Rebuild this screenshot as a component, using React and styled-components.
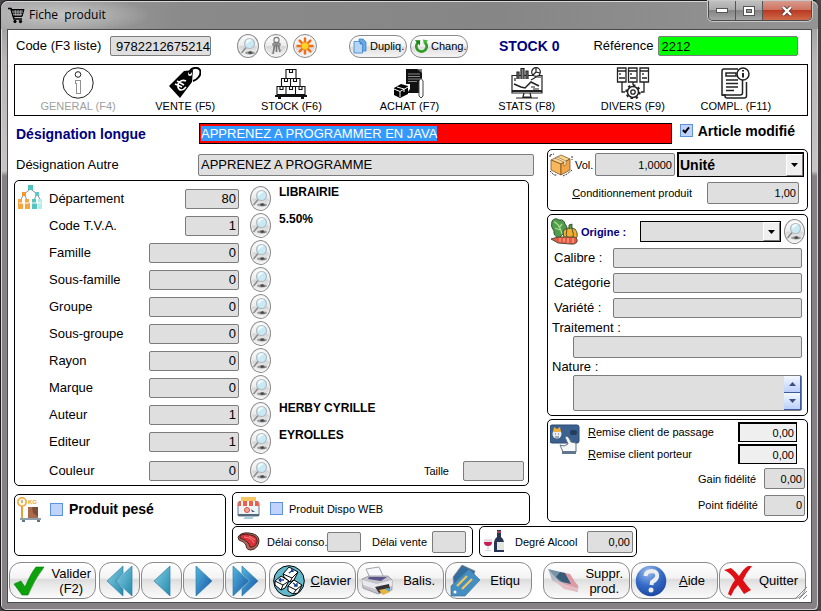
import React, { useEffect, useRef } from "react";
import styled, { createGlobalStyle, css } from "styled-components";

const sans = '"Liberation Sans", Arial, sans-serif';

const GlobalStyle = createGlobalStyle`
  *, *::before, *::after { box-sizing: border-box; }
  body { margin: 0; background: #4a484a; font: 13px/16px ${sans}; color: #000; }
  button, input, select, textarea { font: inherit; color: inherit; margin: 0; border-radius: 0; }
  button { padding: 0; cursor: pointer; }
  svg { display: block; flex: none; }
`;

/* ---------- window frame ---------- */

const Window = styled.div`
  display: flex;
  flex-direction: column;
  min-height: 100vh;
  border: 1px solid #1c1a1c;
  border-right: 3px solid #454345;
  border-radius: 8px 8px 6px 6px;
  background: linear-gradient(to bottom, #939393 0, #b9b7b8 60px, #c6c4c5 170px, #858184 175px, #858184 100%);
  box-shadow: inset 1px 1px 0 #d8d8d8, inset -1px -1px 0 #d0d0d0;
`;

const TitleBar = styled.header`
  display: flex;
  align-items: flex-start;
  height: 28px;
  padding: 0 6px 0 7px;
  border-radius: 7px 7px 0 0;
  background:
    radial-gradient(ellipse 90px 18px at 60px 14px, #c4c4c4 0, #c4c4c400 100%),
    linear-gradient(to right, #a8a8a8 0, #8a8a8a 180px, #868686 60%, #949494 100%);
  box-shadow: inset 0 1px 0 #d8d8d8;
`;

const Title = styled.h1`
  display: flex;
  align-items: center;
  gap: 4px;
  flex: 1;
  margin: 0;
  padding-top: 5px;
  font: 12px/18px "Open Sans", sans-serif;
  white-space: pre;
`;

const WindowControls = styled.div`
  display: flex;
  height: 20px;
  border: 1px solid #4c4c4c;
  border-top: 0;
  border-radius: 0 0 5px 5px;
  overflow: hidden;
  box-shadow: 0 0 0 1px #c8c8c8;
`;

const ControlButton = styled.button`
  display: grid;
  place-items: center;
  width: ${(p) => (p.$close ? 48 : 27)}px;
  border: 0;
  border-right: ${(p) => (p.$close ? 0 : "1px solid #555")};
  background: ${(p) =>
    p.$close
      ? "linear-gradient(#d79a8c 0, #cf7461 45%, #b93a22 50%, #cf6a48 100%)"
      : "linear-gradient(#c0c0c0 0, #aaaaaa 45%, #858585 50%, #a4a4a4 100%)"};
`;

const Client = styled.main`
  display: flex;
  flex-direction: column;
  flex: 1;
  margin: 0 6px 7px;
  border: 1px solid #4b494b;
  background: #fff;
`;

/* ---------- shared controls ---------- */

const Label = styled.label`
  flex: none;
  width: ${(p) => (p.$w ? p.$w + "px" : "auto")};
  white-space: nowrap;
  ${(p) => p.$small && css`font-size: 11px;`}
`;

const Underlined = styled.span`
  text-decoration: underline;
`;

const Strong = styled.strong`
  color: ${(p) => (p.$navy ? "#000080" : "#000")};
  font-size: ${(p) => p.$size || 14}px;
  white-space: nowrap;
`;

const Field = styled.input`
  flex: ${(p) => (p.$w ? "none" : "1")};
  width: ${(p) => (p.$w ? p.$w + "px" : "auto")};
  min-width: 0;
  height: ${(p) => p.$h || 20}px;
  padding: 1px 2px;
  border: 1px solid #7c7c7c;
  border-radius: 2px;
  background: ${(p) => p.$bg || "#dfdfdf"};
  text-align: ${(p) => (p.$left ? "left" : "right")};
  outline: 0;
  ${(p) => p.$small && css`font-size: 11px;`}
`;

const CodeField = styled(Field)`
  padding-right: 0;
`;

const DiscountField = styled(Field)`
  border: 1px solid #000;
  border-width: 2px 1px 1px 2px;
  border-radius: 0;
  background: #efefef;
`;

const TitleField = styled.input`
  flex: 1;
  min-width: 0;
  height: 21px;
  padding: 0 1px;
  border: 1px solid #000;
  background: #f00;
  color: #fff;
  line-height: 19px;
  outline: 0;
  caret-color: transparent;
  &::selection { background: #3399ff; color: #fff; }
`;

const Check = styled.input`
  appearance: none;
  display: grid;
  place-items: center;
  flex: none;
  width: 13px;
  height: 13px;
  border: 1px solid #5b93e0;
  background: #c1d3fb;
  &:checked::before {
    content: "";
    width: 4px;
    height: 7px;
    margin-bottom: 2px;
    border: solid #000;
    border-width: 0 2px 2px 0;
    transform: rotate(40deg);
  }
`;

const Round = styled.button`
  display: grid;
  place-items: center;
  flex: none;
  width: ${(p) => p.$w || 21}px;
  height: ${(p) => p.$h || 25}px;
  border: 1px solid #8a8a8a;
  border-radius: 50%;
  background: linear-gradient(#fdfdfd 0, #ececec 48%, #d6d6d6 52%, #f6f6f6 100%);
  box-shadow: inset 0 0 0 1px #f4f4f4;
`;

const Pill = styled.button`
  display: flex;
  align-items: center;
  gap: 2px;
  width: 58px;
  height: 23px;
  padding: 0 3px;
  border: 1px solid #8a8a8a;
  border-radius: 11px;
  background: linear-gradient(#fff 0, #f2f2f2 48%, #dedede 52%, #f4f4f4 100%);
  font: 11px/16px ${sans};
`;

const SelectBox = styled.div`
  display: grid;
  flex: 1;
  grid-template-columns: 1fr 17px;
  height: ${(p) => p.$h}px;
  border: solid #000;
  border-width: ${(p) => (p.$thick ? "2px 1px 1px 2px" : "1px")};
  background: #dfdfdf;
`;

const Select = styled.select`
  grid-area: 1 / 1 / 2 / 3;
  appearance: none;
  min-width: 0;
  padding: 0 18px 0 1px;
  border: 0;
  background: transparent;
  font-weight: bold;
  font-size: 14px;
  outline: 0;
`;

const SelectArrow = styled.span`
  grid-area: 1 / 2;
  display: grid;
  place-items: center;
  border: 1px solid;
  border-color: #fff #777 #777 #fff;
  background: #efefef;
  pointer-events: none;
`;

const Panel = styled.section`
  border: 1px solid #000;
  border-radius: 5px;
  background: #fff;
`;

/* ---------- header rows ---------- */

const CodeRow = styled.div`
  display: flex;
  align-items: center;
  height: 34px;
  padding: 0 13px 2px 8px;
`;

const IconGroup = styled.div`
  display: flex;
  gap: 5px;
  margin: 0 32px 0 26px;
`;

const PillGroup = styled.div`
  display: flex;
  gap: 3px;
  margin-right: 31px;
`;

const Reference = styled.div`
  display: flex;
  align-items: center;
  flex: 1;
  min-width: 0;
  margin-left: 34px;
`;

const Tabs = styled.nav`
  display: grid;
  grid-template-columns: 108fr 106fr 106fr 130fr 104fr 108fr 98fr;
  height: 52px;
  margin: 0 3px 0 6px;
  padding: 2px 22px 2px 9px;
  border: 1px solid #000;
`;

const Tab = styled.button`
  display: flex;
  flex-direction: column;
  align-items: center;
  border: 0;
  background: none;
  font: 11px/14px ${sans};
  color: ${(p) => (p.disabled ? "#a0a0a0" : "#000")};
  white-space: nowrap;
`;

const LongRow = styled.div`
  display: flex;
  align-items: center;
  height: 33px;
  padding: 2px 16px 0 8px;
`;

const LongLabel = styled(Label)`
  width: 183px;
  color: #000080;
  font-weight: bold;
  font-size: 14px;
`;

const CheckLine = styled.label`
  display: flex;
  align-items: center;
  gap: 5px;
  margin-left: 8px;
  padding-bottom: 6px;
`;

/* ---------- body ---------- */

const Body = styled.div`
  display: grid;
  grid-template-columns: 218px minmax(0, 1fr) 261px;
  grid-template-rows: 343px 34px auto;
  padding: 0 3px 0 6px;
`;

const MainArea = styled.div`
  grid-area: 1 / 1 / 2 / 3;
`;

const OtherRow = styled.div`
  display: flex;
  align-items: center;
  height: 31px;
  padding: 0 13px 0 2px;
`;

const AttributesPanel = styled(Panel)`
  display: grid;
  grid-template-columns: 31px 1fr;
  margin-right: 18px;
  padding: 4px 4px 1px 3px;
`;

const Rows = styled.div`
  display: flex;
  flex-direction: column;
`;

const AttributeRow = styled.div`
  display: flex;
  align-items: center;
  height: 27px;
  margin-top: ${(p) => (p.$last ? 2 : 0)}px;
`;

const AttributeField = styled(Field)`
  width: ${(p) => (p.$short ? 54 : 90)}px;
  margin: 0 11px 0 ${(p) => (p.$short ? 36 : 0)}px;
  flex: none;
`;

const AttributeName = styled(Strong)`
  align-self: flex-start;
  margin-left: 8px;
  line-height: 15px;
`;

const SizeGroup = styled.div`
  display: flex;
  align-items: center;
  gap: 14px;
  margin-left: auto;
`;

const SidePanels = styled.div`
  grid-area: 1 / 3 / 3 / 4;
  display: flex;
  flex-direction: column;
  gap: 3px;
`;

const SidePanel = styled(Panel)`
  display: flex;
  flex-direction: column;
  padding: ${(p) => p.$pad || "3px 2px 4px 2px"};
`;

const Line = styled.div`
  display: flex;
  align-items: center;
  gap: ${(p) => p.$gap || 0}px;
  height: ${(p) => p.$h || 25}px;
  padding: ${(p) => p.$pad || "0"};
  justify-content: ${(p) => p.$justify || "flex-start"};
`;

const NatureBox = styled.div`
  display: flex;
  height: 36px;
  margin: 0 3px 0 23px;
  border: 1px solid #7c7c7c;
  border-radius: 2px;
  background: #dfdfdf;
`;

const NatureText = styled.textarea`
  flex: 1;
  min-width: 0;
  border: 0;
  background: transparent;
  resize: none;
  outline: 0;
`;

const Stepper = styled.div`
  display: flex;
  flex-direction: column;
  width: 17px;
`;

const StepButton = styled.button`
  display: grid;
  place-items: center;
  flex: 1;
  border: 0;
  border-right: 1px solid #3c5a9c;
  border-bottom: 1px solid #3c5a9c;
  background: linear-gradient(#f4f8ff, #bccffa);
`;

const LoyaltyPanel = styled(Panel)`
  display: grid;
  grid-template-columns: 38px 1fr;
  padding: 1px 2px 3px 2px;
`;

const LoyaltyIcon = styled.div`
  padding-top: 3px;
`;

const WeightPanel = styled(Panel)`
  grid-area: 2 / 1 / 4 / 2;
  display: flex;
  align-items: flex-start;
  gap: 8px;
  margin: 2px 6px 1px 0;
  padding: 2px;
`;

const WeightCheck = styled.label`
  display: flex;
  align-items: center;
  gap: 6px;
  padding-top: 4px;
`;

const WebPanel = styled(Panel)`
  grid-area: 2 / 2;
  display: flex;
  align-items: center;
  gap: 10px;
  margin: 0 17px 1px 0;
  padding: 0 4px;
`;

const SmallCheck = styled.label`
  display: flex;
  align-items: center;
  gap: 6px;
  font-size: 11px;
`;

const BottomPanels = styled.div`
  grid-area: 3 / 2 / 4 / 4;
  display: flex;
  gap: 6px;
`;

const DelayPanel = styled(Panel)`
  display: flex;
  align-items: center;
  height: 31px;
  width: 241px;
  padding: 0 4px;
`;

const AlcoholPanel = styled(Panel)`
  display: flex;
  align-items: center;
  gap: 10px;
  height: 31px;
  width: 158px;
  padding: 0 3px;
`;

const ActionBar = styled.footer`
  display: flex;
  align-items: center;
  gap: 1px;
  margin-top: auto;
  padding: 4px 4px 3px 1px;
`;

const Action = styled.button`
  display: flex;
  align-items: center;
  justify-content: space-between;
  width: ${(p) => (p.$nav ? 41 : 87)}px;
  height: 37px;
  margin-left: ${(p) => (p.$push ? "auto" : p.$gap ? "2px" : 0)};
  padding: 0 ${(p) => p.$right || 4}px 0 3px;
  border: 1px solid #8a8a8a;
  border-radius: 12px;
  background: linear-gradient(#fff 0, #f3f3f3 42%, #dcdcdc 48%, #e8e8e8 62%, #fafafa 100%);
  line-height: 15px;
  text-align: center;
  ${(p) => p.$nav && css`
    justify-content: center;
    padding: 0;
  `}
`;

const Grip = styled.div`
  display: flex;
  align-self: flex-end;
  width: 0;
  justify-content: flex-end;
`;

/* ---------- icons ---------- */

const Magnifier = () => (
  <svg width="17" height="21" viewBox="0 0 17 21">
    <ellipse cx="10" cy="17" rx="5" ry="1.4" fill="#9b9b9b" />
    <path d="M8 16 L11 15 L13 17.500 L9 18 Z" fill="#4d4d4d" />
    <path d="M6 11.500 L1.500 17" stroke="#888" strokeWidth="1.4" />
    <circle cx="9.5" cy="7.5" r="5" fill="#c9e9f5" stroke="#b0bbc2" strokeWidth="1.1" />
    <path d="M6 5 Q9 2 12 4 Q9 5 6.5 8Z" fill="#f4fcff" />
  </svg>
);

const LookupButton = ({ label, w, h }) => (
  <Round type="button" aria-label={label} $w={w} $h={h}><Magnifier /></Round>
);

const CartIcon = () => (
  <svg width="17" height="17" viewBox="0 0 17 17" fill="none" stroke="#000">
    <path d="M0 1.500H3L6 12H14" strokeWidth="1.5" />
    <path d="M3 2.500H16L14 9.500H5Z" fill="#333" />
    <path d="M4 5H15M5 7.500H14M7 3L8 9M10 3V9M13 3L12 9" stroke="#bbb" strokeWidth=".7" />
    <circle cx="7" cy="14.5" r="1.2" fill="#000" /><circle cx="12.5" cy="14.5" r="1.2" fill="#000" />
  </svg>
);

const KeysIcon = () => (
  <svg width="14" height="20" viewBox="0 0 14 20" fill="#999" stroke="#777">
    <circle cx="7.500" cy="4" r="2.6" fill="none" strokeWidth="1.1" />
    <circle cx="5.500" cy="8.500" r="1.8" /><circle cx="9.500" cy="8.500" r="1.8" />
    <path d="M5.500 10 L4 18M9.500 10 L11 16M7.500 9V16" strokeWidth="1.6" />
    <path d="M2.500 17H5M10 14H12.500" stroke="#999" />
  </svg>
);

const SunIcon = () => (
  <svg width="18" height="18" viewBox="0 0 18 18">
    <g stroke="#f26a12" strokeWidth="2.4" strokeLinecap="round">
      <path d="M9 1.5V16.5M1.5 9H16.5M3.6 3.6L14.4 14.4M14.4 3.6L3.6 14.4" />
    </g>
    <circle cx="9" cy="9" r="3.8" fill="#ffd426" stroke="#f5961e" />
  </svg>
);

const CopyIcon = () => (
  <svg width="15" height="17" viewBox="0 0 15 17" stroke="#3f83cc" strokeWidth=".8">
    <path d="M6 1H10L13 4V13H6Z" fill="#6aa8e6" />
    <path d="M1 3.5H7L9.5 6V15H1Z" fill="#b6d6f7" />
    <path d="M7 3.5V6H9.5" fill="#3c8ae0" />
  </svg>
);

const RefreshIcon = () => (
  <svg width="15" height="15" viewBox="0 0 15 15">
    <path d="M4.2 3.2A5.3 5.3 0 1 0 10.8 3.2" fill="none" stroke="#2d9a22" strokeWidth="2.7" />
    <path d="M.8 1.2L6.2 1.2L6 6.4Z" fill="#168312" />
    <path d="M9 .6L14 1.6L10 6Z" fill="#46b539" />
  </svg>
);

const InfoTab = () => (
  <svg width="32" height="32" viewBox="0 0 32 32" fill="none" stroke="#222" strokeWidth="1">
    <circle cx="16" cy="16" r="15.2" /><circle cx="16" cy="7.5" r="2.8" />
    <path d="M13.500 13.5H18.500V26.500H14.500V16.500H13.500Z" strokeDasharray="1 1" />
  </svg>
);

const TagTab = () => (
  <svg width="32" height="32" viewBox="0 0 32 32">
    <path d="M0 19L15 4L24 3L23 15L11 31Z" fill="#000" />
    <circle cx="21" cy="7" r="2" fill="#fff" />
    <path d="M21 7C20 1 28 -1 31 3C33 8 28 13 24 14" fill="none" stroke="#000" strokeWidth="2" />
    <path d="M17 14C12 12 8 16 9 20S14 24 17 20M6 17L13 20M8 14L15 18" fill="none" stroke="#fff" strokeWidth="1.6" />
  </svg>
);

const StockTab = () => (
  <svg width="32" height="32" viewBox="0 0 32 32" fill="none" stroke="#111" strokeWidth="1.1">
    <path d="M11 2.500H21V11.500H11ZM6.500 11.500H15.500V19.500H6.500ZM15.500 11.500H25V19.500H15.500ZM2 19.500H11V27.500H2ZM11 19.500H20.500V27.500H11ZM20.500 19.500H30V27.500H20.500Z" />
    <path d="M14.5 2.500V5.500H17.500V2.500M9.500 12V14.500H12.500V12M18.500 12V14.500H21.500V12M5 20V22.500H8V20M14.500 20V22.500H17.500V20M24 20V22.500H27V20" />
    <path d="M0 29H32M3 31H6M26 31H29" strokeWidth="2" />
  </svg>
);

const PurchaseTab = () => (
  <svg width="32" height="32" viewBox="0 0 32 32">
    <path d="M13 2H29V26H14L17 22V17H13Z" fill="#111" />
    <path d="M15 7H27M15 9.500H27M15 12H27M15 14.500H24" stroke="#8a8a8a" strokeWidth="1.2" />
    <path d="M24 2H29V6Z" fill="#777" />
    <path d="M26 29V14L28 11L30 14V29L28 31Z" fill="#fff" stroke="#444" />
    <path d="M1 21L8 17L15 19V27L7 31L1 28Z" fill="#000" />
    <path d="M1 22L7 24.500L15 20M7 25V30M4 20L11 22V25" fill="none" stroke="#fff" />
  </svg>
);

const StatsTab = () => (
  <svg width="32" height="32" viewBox="0 0 32 32" fill="none" stroke="#222" strokeWidth="1.2">
    <path d="M1 8.500H31V26H1Z" /><path d="M1 24H31" strokeWidth="2" />
    <path d="M13 26L12 30H20L19 26M5 31H27" />
    <path d="M6 12V5H8V12M10 12V1.500H13V12M15 12V4H17V12" fill="#888" />
    <circle cx="25" cy="5" r="4.300" fill="#fff" /><path d="M25 1V5L29 6M25 5L22 8" />
    <path d="M3 17L10 20L14 21L20 15L28 19" strokeWidth="1.500" />
    <path d="M20 13L25 10H30M4 11V14M22 22H28M20 20H24" />
  </svg>
);

const ServersTab = () => (
  <svg width="34" height="32" viewBox="0 0 34 32" fill="none" stroke="#222" strokeWidth="1.300">
    <path d="M1.500 1H10V15H1.500ZM12.500 1H21V15H12.500ZM24 1H32.500V15H24Z" />
    <path d="M1.500 4H10M12.500 4H21M24 4H32.500M3 11H9M14 11H20M26 11H31M4 8V6M15 8V6M27 8V6" />
    <path d="M6 15V25H9M28 15V25H25M17 15V18" />
    <circle cx="17" cy="25" r="5.500" strokeWidth="1.500" /><circle cx="17" cy="25" r="2.200" />
    <circle cx="17" cy="25" r="6.800" strokeDasharray="2.500 2.800" strokeWidth="1.800" />
  </svg>
);

const DocumentTab = () => (
  <svg width="32" height="32" viewBox="0 0 32 32" fill="none" stroke="#222" strokeWidth="1.500">
    <path d="M18 2H4Q2 2 2 4V28H5V29Q5 31 7 31H24Q26.500 31 26.500 29V15" />
    <path d="M2 28H20Q22.500 28 22.500 26V13" />
    <path d="M6 6H16V9H6ZM6 13H18M6 16.500H18M6 20H18M6 23.500H14" />
    <circle cx="23" cy="7" r="6" fill="#fff" /><path d="M23 6V10.500M23 3V4.500" strokeWidth="2" />
  </svg>
);

const TreeIcon = () => (
  <svg width="25" height="25" viewBox="0 0 25 25">
    <path d="M12.500 4L6 9L2.500 15M6 9L9 15M12.500 4L19 9L16 15M19 9L22.500 15" fill="none" stroke="#7a9a94" />
    <rect x="10" y="0" width="5" height="5" fill="#4fc3bd" />
    <rect x="4" y="7" width="4" height="4" fill="#f4982c" />
    <rect x="17" y="7" width="4" height="4" fill="#5cc9c4" />
    <path d="M0 14H4V18H5V24H0ZM7 14H11V18H12V24H7Z" fill="#f7a540" />
    <path d="M14 14H18V18H19V24H14Z" fill="#56c4c0" /><path d="M20 14H24V24H20Z" fill="#b3ecea" />
    <path d="M1 18H11M14 18H23" stroke="#fff" />
  </svg>
);

const BoxIcon = () => (
  <svg width="24" height="24" viewBox="0 0 24 24">
    <path d="M1 2L5 1M1 2V5M23 3V7M1 18L5 22H8M23 17L18 21L14 23" fill="none" stroke="#333" strokeDasharray="2 1" />
    <path d="M2 7L12 2L21 6L12 11Z" fill="#ffd58b" stroke="#6e4518" strokeWidth=".7" />
    <path d="M2 7L12 11V22L2 17Z" fill="#f9b85c" stroke="#6e4518" strokeWidth=".7" />
    <path d="M12 11L21 6V17L12 22Z" fill="#f2a545" stroke="#6e4518" strokeWidth=".7" />
    <path d="M6 5L15 9V13L17 12V8L8 4Z" fill="#fff1cf" stroke="#6e4518" strokeWidth=".5" />
  </svg>
);

const VegetablesIcon = () => (
  <svg width="28" height="28" viewBox="0 0 28 28" stroke="#263d2b" strokeWidth=".8">
    <path d="M2 3Q5 -1 9 2Q14 1 15 6Q19 10 15 14L9 20Q3 18 4 13Q0 9 2 3Z" fill="#4d9d4b" />
    <path d="M4 4Q9 5 12 16M12 6L9 10M5 10L10 12" fill="none" stroke="#a7d88b" strokeWidth="1.300" />
    <path d="M13 13Q18 8 25 11Q29 16 26 21Q19 24 14 21Z" fill="#f3ae31" />
    <path d="M19 11V7L22 6V11" fill="#68943a" /><path d="M17 11Q15 16 18 22M22 11Q25 16 22 22" fill="none" />
    <path d="M1 21L8 19H24Q28 20 27 24Q25 27 20 26L8 25Z" fill="#e65a43" />
    <path d="M10 20V24M14 20V24M18 20V25M23 20V25" stroke="#ffd0b0" />
  </svg>
);

const CardIcon = () => (
  <svg width="30" height="30" viewBox="0 0 30 30">
    <rect x="0" y="1" width="29" height="18" rx="2" fill="#3d618f" stroke="#294b75" />
    <circle cx="7" cy="10" r="4.500" fill="#e9edf2" /><path d="M3 8L4 3L7 5L10 3L11 8Z" fill="#f0ae3d" />
    <path d="M5 10H6M8 10H9M5 13H9" stroke="#54657a" />
    <rect x="20" y="6" width="7" height="5" rx="2" fill="#243e5e" />
    <path d="M15 13Q17 11 19 14L21 18L26 19V28H13L10 21L14 22L18 20Z" fill="#f7f8fa" stroke="#5f7187" />
    <path d="M12 27H26V30H12Z" fill="#61758b" />
  </svg>
);

const ScaleIcon = () => (
  <svg width="25" height="25" viewBox="0 0 25 25">
    <path d="M5 8V21" stroke="#e8a23c" strokeWidth="2" />
    <circle cx="5" cy="5" r="4.200" fill="#fff8df" stroke="#eda436" strokeWidth="1.500" /><path d="M5 3V6" stroke="#777" />
    <text x="11" y="7" fontFamily="Liberation Sans" fontSize="6" fontWeight="bold" fill="#eda436">KG</text>
    <rect x="11" y="10" width="10" height="11" fill="#a96b4b" /><path d="M15 10L16 16L21 20V10Z" fill="#7d4c39" />
    <path d="M3 21H24V23H3Z" fill="#90a0ab" /><path d="M5 24H8M20 24H23" stroke="#647681" strokeWidth="2" />
  </svg>
);

const ShopIcon = () => (
  <svg width="23" height="23" viewBox="0 0 23 23">
    <rect x="1" y="5" width="21" height="14" rx="1" fill="#eff3f6" stroke="#657b8d" />
    <rect x="4" y="0" width="15" height="5" fill="#f7c65e" />
    <path d="M2 4H21L22 9H1Z" fill="#f15d4d" /><path d="M5 4V9M11 4V9M17 4V9" stroke="#fff" strokeWidth="2" />
    <circle cx="10" cy="13" r="2.500" fill="#f4a79b" stroke="#dd4e42" /><path d="M14 12L18 15H15Z" fill="#465c70" />
    <path d="M1 18H22" stroke="#52697a" strokeWidth="2" /><path d="M8 20H16V22H6Z" fill="#a9cee0" />
  </svg>
);

const MeatIcon = () => (
  <svg width="23" height="19" viewBox="0 0 23 19" stroke="#442522" strokeWidth="1">
    <path d="M1 5Q4 0 12 1Q22 2 22 9Q21 17 14 18Q9 18 9 13Q8 10 2 8Z" fill="#b0645a" />
    <path d="M3 4Q6 1 13 3Q21 4 20 10Q18 16 13 15Q12 9 3 6Z" fill="#dd3038" />
    <path d="M7 5Q14 5 17 11M12 4L18 8" fill="none" stroke="#f68686" />
  </svg>
);

const WineIcon = () => (
  <svg width="22" height="23" viewBox="0 0 22 23">
    <path d="M14 0H18V7Q21 9 21 12V22H11V12Q11 9 14 7Z" fill="#263654" />
    <path d="M14 1H18V3H14Z" fill="#b34660" /><rect x="14" y="12" width="7" height="8" fill="#e5e5df" />
    <path d="M1 9H9Q10 15 6 16V20H8V21H2V20H4V16Q0 15 1 9Z" fill="#e3dfe6" />
    <path d="M1 12H9Q9 16 5 16T1 12Z" fill="#c41e58" />
  </svg>
);

const CheckMark = () => (
  <svg width="32" height="32" viewBox="0 0 32 32">
    <path d="M1 19L8 16L12 22Q18 8 23 2H31Q21 15 15 30H9Z" fill="#0ca20c" stroke="#087808" strokeWidth=".6" />
  </svg>
);

const Arrows = ({ double, right, dark }) => (
  <svg width={double ? 27 : 18} height="32" viewBox={double ? "0 0 27 32" : "0 0 18 32"}>
    <defs>
      <linearGradient id={`arrow${double ? 2 : 1}${right ? "r" : "l"}`} x1="0" y1="0" x2="1" y2="1">
        <stop offset="0" stopColor={dark ? "#55b7dc" : "#8bd0e2"} />
        <stop offset="1" stopColor={dark ? "#1450a5" : "#2089ad"} />
      </linearGradient>
    </defs>
    <g fill={`url(#arrow${double ? 2 : 1}${right ? "r" : "l"})`} stroke="#2d83af" strokeWidth=".7">
      {right ? (
        <>
          <path d="M1 1L17 16L1 31Z" />
          {double && <path d="M10 1L26 16L10 31L10 24L18 16L10 8Z" />}
        </>
      ) : (
        <>
          {double && <path d="M17 1L1 16L17 31L17 24L9 16L17 8Z" />}
          <path d={double ? "M26 1L10 16L26 31Z" : "M17 1L1 16L17 31Z"} />
        </>
      )}
    </g>
  </svg>
);

const KeyboardIcon = () => (
  <svg width="32" height="32" viewBox="0 0 32 32" stroke="#000">
    <circle cx="16" cy="16" r="15.300" fill="#62b9cc" />
    <g fill="#fff">
      <path d="M10 9L16 2L25 7L21 15L17 17L11 12Z" /><path d="M2 16L8 11L16 16L12 23L8 25L2 20Z" />
      <path d="M15 21L21 15L29 20L25 28L20 29L15 26Z" />
    </g>
    <path d="M10 9L19 13L25 7M19 13L17 17M2 16L10 20L16 16M10 20L8 25M15 21L23 25L29 20M23 25L20 29" fill="none" />
    <path d="M16 8L20 5M18 5H20V7M11 15H6M8 13L6 15L8 17M20 18L24 21M24 18V21H21" fill="none" stroke="#123c91" strokeWidth="1.300" />
  </svg>
);

const PrinterIcon = () => (
  <svg width="32" height="30" viewBox="0 0 32 30">
    <path d="M5 3L18 1L23 12L10 14Z" fill="#f7f8fa" stroke="#a5a5a8" />
    <path d="M1 13L8 10L27 10L31 14V24L17 28L2 22Z" fill="#c4c3ca" stroke="#8a878f" strokeWidth=".7" />
    <path d="M8 11L26 11L20 15L7 13Z" fill="#5b538b" /><path d="M1 14L16 18L31 14V20L17 24L2 19Z" fill="#e9e8ed" />
    <path d="M14 21L28 18L29 23L18 27Z" fill="#333" /><path d="M18 24L28 22L29 26L22 29Z" fill="#e9b340" /><path d="M24 23L28 22L29 26Z" fill="#36a7dc" />
  </svg>
);

const TagsIcon = () => (
  <svg width="32" height="32" viewBox="0 0 32 32">
    <path d="M4 12L10 4L13 0L26 6L20 24L5 22Z" fill="#356d9e" stroke="#888" strokeWidth=".7" />
    <path d="M2 21L20 4L31 15L16 31H2Z" fill="#438fc4" stroke="#447397" strokeWidth=".7" />
    <circle cx="6" cy="27" r="1.500" fill="#fff" />
    <path d="M8 21L18 11M13 24L23 14" stroke="#f3c657" strokeWidth="2.200" />
  </svg>
);

const EraserIcon = () => (
  <svg width="33" height="26" viewBox="0 0 33 26">
    <path d="M1 1L16 7L31 17V24L18 20L5 12Z" fill="#aeb9c5" />
    <path d="M1 1L14 4L21 10L13 14Z" fill="#7793a5" /><path d="M14 4L23 6L32 20L19 17L10 9Z" fill="#dd9aa5" />
    <path d="M13 4L18 5L24 16L15 14L9 9Z" fill="#365c78" /><path d="M5 10L17 16L31 20V24L17 21Z" fill="#e3bcc4" />
  </svg>
);

const HelpIcon = () => (
  <svg width="32" height="32" viewBox="0 0 32 32">
    <defs><radialGradient id="help" cx=".4" cy=".2" r=".9"><stop offset="0" stopColor="#9dbdf0" /><stop offset=".5" stopColor="#356cc8" /><stop offset="1" stopColor="#173f98" /></radialGradient></defs>
    <circle cx="16" cy="16" r="15.300" fill="url(#help)" />
    <path d="M10.500 11Q11 6 17 6Q23 6.500 22 12Q21 15 17 17L16.500 20" fill="none" stroke="#eee" strokeWidth="4" />
    <circle cx="16" cy="25" r="2.500" fill="#eee" />
  </svg>
);

const CrossIcon = () => (
  <svg width="29" height="32" viewBox="0 0 29 32">
    <path d="M1 5L8 3Q13 7 16 11Q21 3 25 1H29Q23 8 20 15Q24 21 28 25L21 29L15 20Q10 25 8 31L5 29Q8 20 12 15Q8 8 1 5Z" fill="#df1014" />
  </svg>
);

const Triangle = ({ up, wide, color = "#000" }) => (
  <svg width={wide ? 9 : 7} height="4" viewBox="0 0 7 4" preserveAspectRatio="none"><path d={up ? "M0 4L3.500 0L7 4Z" : "M0 0H7L3.500 4Z"} fill={color} /></svg>
);

/* ---------- data ---------- */

const tabs = [
  ["GENERAL (F4)", InfoTab, true],
  ["VENTE (F5)", TagTab],
  ["STOCK (F6)", StockTab],
  ["ACHAT (F7)", PurchaseTab],
  ["STATS (F8)", StatsTab],
  ["DIVERS (F9)", ServersTab],
  ["COMPL. (F11)", DocumentTab],
];

const attributes = [
  { label: "Département", value: "80", name: "LIBRAIRIE", short: true },
  { label: "Code T.V.A.", value: "1", name: "5.50%", short: true },
  { label: "Famille", value: "0" },
  { label: "Sous-famille", value: "0" },
  { label: "Groupe", value: "0" },
  { label: "Sous-groupe", value: "0" },
  { label: "Rayon", value: "0" },
  { label: "Marque", value: "0" },
  { label: "Auteur", value: "1", name: "HERBY CYRILLE" },
  { label: "Editeur", value: "1", name: "EYROLLES" },
  { label: "Couleur", value: "0", size: true },
];

export default function App() {
  const titleRef = useRef(null);
  useEffect(() => {
    titleRef.current.focus();
    titleRef.current.select();
  }, []);

  return (
    <>
      <GlobalStyle />
      <Window>
        <TitleBar>
          <Title><CartIcon />{"Fiche  produit"}</Title>
          <WindowControls>
            <ControlButton type="button" aria-label="Réduire">
              <svg width="12" height="5"><rect x=".5" y=".5" width="11" height="4" fill="#fff" stroke="#555" /></svg>
            </ControlButton>
            <ControlButton type="button" aria-label="Agrandir">
              <svg width="12" height="10"><rect x=".5" y=".5" width="11" height="9" fill="#fff" stroke="#555" /><rect x="3.500" y="3.500" width="5" height="3" fill="#999" stroke="#555" /></svg>
            </ControlButton>
            <ControlButton type="button" aria-label="Fermer" $close>
              <svg width="12" height="10" viewBox="0 0 12 10"><path d="M2 1L10 9M10 1L2 9" stroke="#5b3c3c" strokeWidth="4" /><path d="M2 1L10 9M10 1L2 9" stroke="#fff" strokeWidth="2.400" /></svg>
            </ControlButton>
          </WindowControls>
        </TitleBar>

        <Client>
          <CodeRow>
            <Label htmlFor="code" $w={94}>Code (F3 liste)</Label>
            <CodeField id="code" defaultValue="9782212675214" $w={101} />
            <IconGroup>
              <LookupButton label="Rechercher le code" w={22} h={24} />
              <Round type="button" aria-label="Clés" $w={24} $h={24}><KeysIcon /></Round>
              <Round type="button" aria-label="Nouveau" $w={24} $h={24}><SunIcon /></Round>
            </IconGroup>
            <PillGroup>
              <Pill type="button"><CopyIcon />Dupliq.</Pill>
              <Pill type="button"><RefreshIcon />Chang.</Pill>
            </PillGroup>
            <Strong $navy>STOCK 0</Strong>
            <Reference>
              <Label htmlFor="ref" $w={65}>Référence</Label>
              <Field id="ref" defaultValue="2212" $bg="#00ff00" $left />
            </Reference>
          </CodeRow>

          <Tabs>
            {tabs.map(([label, Icon, off]) => (
              <Tab key={label} type="button" disabled={off}><Icon />{label}</Tab>
            ))}
          </Tabs>

          <LongRow>
            <LongLabel htmlFor="long">Désignation longue</LongLabel>
            <TitleField id="long" ref={titleRef} defaultValue="APPRENEZ A PROGRAMMER EN JAVA" />
            <CheckLine><Check type="checkbox" defaultChecked /><Strong>Article modifié</Strong></CheckLine>
          </LongRow>

          <Body>
            <MainArea>
              <OtherRow>
                <Label htmlFor="other" $w={182}>Désignation Autre</Label>
                <Field id="other" defaultValue="APPRENEZ A PROGRAMME" $left $h={22} />
              </OtherRow>
              <AttributesPanel>
                <TreeIcon />
                <Rows>
                  {attributes.map((a) => (
                    <AttributeRow key={a.label} $last={a.size}>
                      <Label htmlFor={a.label} $w={100}>{a.label}</Label>
                      <AttributeField id={a.label} defaultValue={a.value} $short={a.short} />
                      <LookupButton label={`Rechercher ${a.label}`} />
                      {a.name && <AttributeName $size={12}>{a.name}</AttributeName>}
                      {a.size && (
                        <SizeGroup>
                          <Label htmlFor="size" $small>Taille</Label>
                          <Field id="size" $w={61} />
                        </SizeGroup>
                      )}
                    </AttributeRow>
                  ))}
                </Rows>
              </AttributesPanel>
            </MainArea>

            <SidePanels>
              <SidePanel $pad="1px 3px 3px 1px">
                <Line $gap={2} $h={27}>
                  <BoxIcon />
                  <Label htmlFor="vol" $w={18} $small>Vol.</Label>
                  <Field id="vol" defaultValue="1,0000" $w={80} $h={23} $small />
                  <SelectBox $h={25} $thick>
                    <Select aria-label="Unité de volume"><option>Unité</option></Select>
                    <SelectArrow><Triangle /></SelectArrow>
                  </SelectBox>
                </Line>
                <Line $h={29} $gap={15} $justify="flex-end" $pad="0 5px 0 0">
                  <Label htmlFor="cond" $small><Underlined>C</Underlined>onditionnement produit</Label>
                  <Field id="cond" defaultValue="1,00" $w={92} $h={22} $small />
                </Line>
              </SidePanel>

              <SidePanel>
                <Line $h={27} $gap={3}>
                  <VegetablesIcon />
                  <Label htmlFor="origin" $w={56}><Strong $navy $size={11}>Origine :</Strong></Label>
                  <SelectBox $h={21}>
                    <Select id="origin"><option></option></Select>
                    <SelectArrow><Triangle /></SelectArrow>
                  </SelectBox>
                  <LookupButton label="Rechercher l'origine" />
                </Line>
                <Line $pad="0 3px 0 4px"><Label htmlFor="cal" $w={59}>Calibre :</Label><Field id="cal" /></Line>
                <Line $pad="0 3px 0 4px"><Label htmlFor="cat" $w={59}>Catégorie</Label><Field id="cat" /></Line>
                <Line $pad="0 3px 0 4px"><Label htmlFor="var" $w={59}>Variété :</Label><Field id="var" /></Line>
                <Line $h={16} $pad="0 0 0 2px"><Label htmlFor="trait">Traitement :</Label></Line>
                <Line $h={22} $pad="0 3px 0 23px"><Field id="trait" $h={22} /></Line>
                <Line $h={17} $pad="0 0 0 2px"><Label htmlFor="nat">Nature :</Label></Line>
                <NatureBox>
                  <NatureText id="nat" />
                  <Stepper>
                    <StepButton type="button" aria-label="Monter"><Triangle up color="#3a4f86" /></StepButton>
                    <StepButton type="button" aria-label="Descendre"><Triangle color="#3a4f86" /></StepButton>
                  </Stepper>
                </NatureBox>
              </SidePanel>

              <LoyaltyPanel>
                <LoyaltyIcon><CardIcon /></LoyaltyIcon>
                <Rows>
                  <Line $h={22} $justify="space-between" $pad="0 8px 0 0">
                    <Label htmlFor="pass" $small><Underlined>R</Underlined>emise client de passage</Label>
                    <DiscountField id="pass" defaultValue="0,00" $w={59} $small />
                  </Line>
                  <Line $h={22} $justify="space-between" $pad="0 8px 0 0">
                    <Label htmlFor="port" $small><Underlined>R</Underlined>emise client porteur</Label>
                    <DiscountField id="port" defaultValue="0,00" $w={59} $small />
                  </Line>
                  <Line $h={27} $justify="flex-end">
                    <Label htmlFor="gain" $w={66} $small>Gain fidélité</Label>
                    <Field id="gain" defaultValue="0,00" $w={41} $h={21} $small />
                  </Line>
                  <Line $h={26} $justify="flex-end">
                    <Label htmlFor="point" $w={66} $small>Point fidélité</Label>
                    <Field id="point" defaultValue="0" $w={41} $h={21} $small />
                  </Line>
                </Rows>
              </LoyaltyPanel>
            </SidePanels>

            <WeightPanel>
              <ScaleIcon />
              <WeightCheck><Check type="checkbox" /><Strong>Produit pesé</Strong></WeightCheck>
            </WeightPanel>

            <WebPanel>
              <ShopIcon />
              <SmallCheck><Check type="checkbox" />Produit Dispo WEB</SmallCheck>
            </WebPanel>

            <BottomPanels>
              <DelayPanel>
                <MeatIcon />
                <Line $pad="0 0 0 7px">
                  <Label htmlFor="conso" $w={60} $small>Délai conso.</Label>
                  <Field id="conso" $w={34} $small />
                </Line>
                <Line $pad="0 0 0 11px">
                  <Label htmlFor="sale" $w={60} $small>Délai vente</Label>
                  <Field id="sale" $w={34} $h={22} $small />
                </Line>
              </DelayPanel>
              <AlcoholPanel>
                <WineIcon />
                <Label htmlFor="deg" $small>Degré Alcool</Label>
                <Field id="deg" defaultValue="0,00" $h={22} $small />
              </AlcoholPanel>
            </BottomPanels>
          </Body>

          <ActionBar>
            <Action type="button"><CheckMark /><span>Valider<br />(F2)</span></Action>
            <Action type="button" aria-label="Premier" $nav $gap><Arrows double /></Action>
            <Action type="button" aria-label="Précédent" $nav><Arrows /></Action>
            <Action type="button" aria-label="Suivant" $nav><Arrows right dark /></Action>
            <Action type="button" aria-label="Dernier" $nav><Arrows double right dark /></Action>
            <Action type="button" $gap><KeyboardIcon /><span><Underlined>C</Underlined>lavier</span></Action>
            <Action type="button" $right={8}><PrinterIcon /><span>Balis.</span></Action>
            <Action type="button" $right={11}><TagsIcon /><span>Etiqu</span></Action>
            <Action type="button" $push $right={6}><EraserIcon /><span>Suppr.<br />prod.</span></Action>
            <Action type="button" $right={12}><HelpIcon /><span><Underlined>A</Underlined>ide</span></Action>
            <Action type="button" $right={7}><CrossIcon /><span>Quitter</span></Action>
            <Grip><svg width="12" height="12" viewBox="0 0 12 12" stroke="#888"><path d="M0 12L12 0M4 12L12 4M8 12L12 8" /></svg></Grip>
          </ActionBar>
        </Client>
      </Window>
    </>
  );
}
